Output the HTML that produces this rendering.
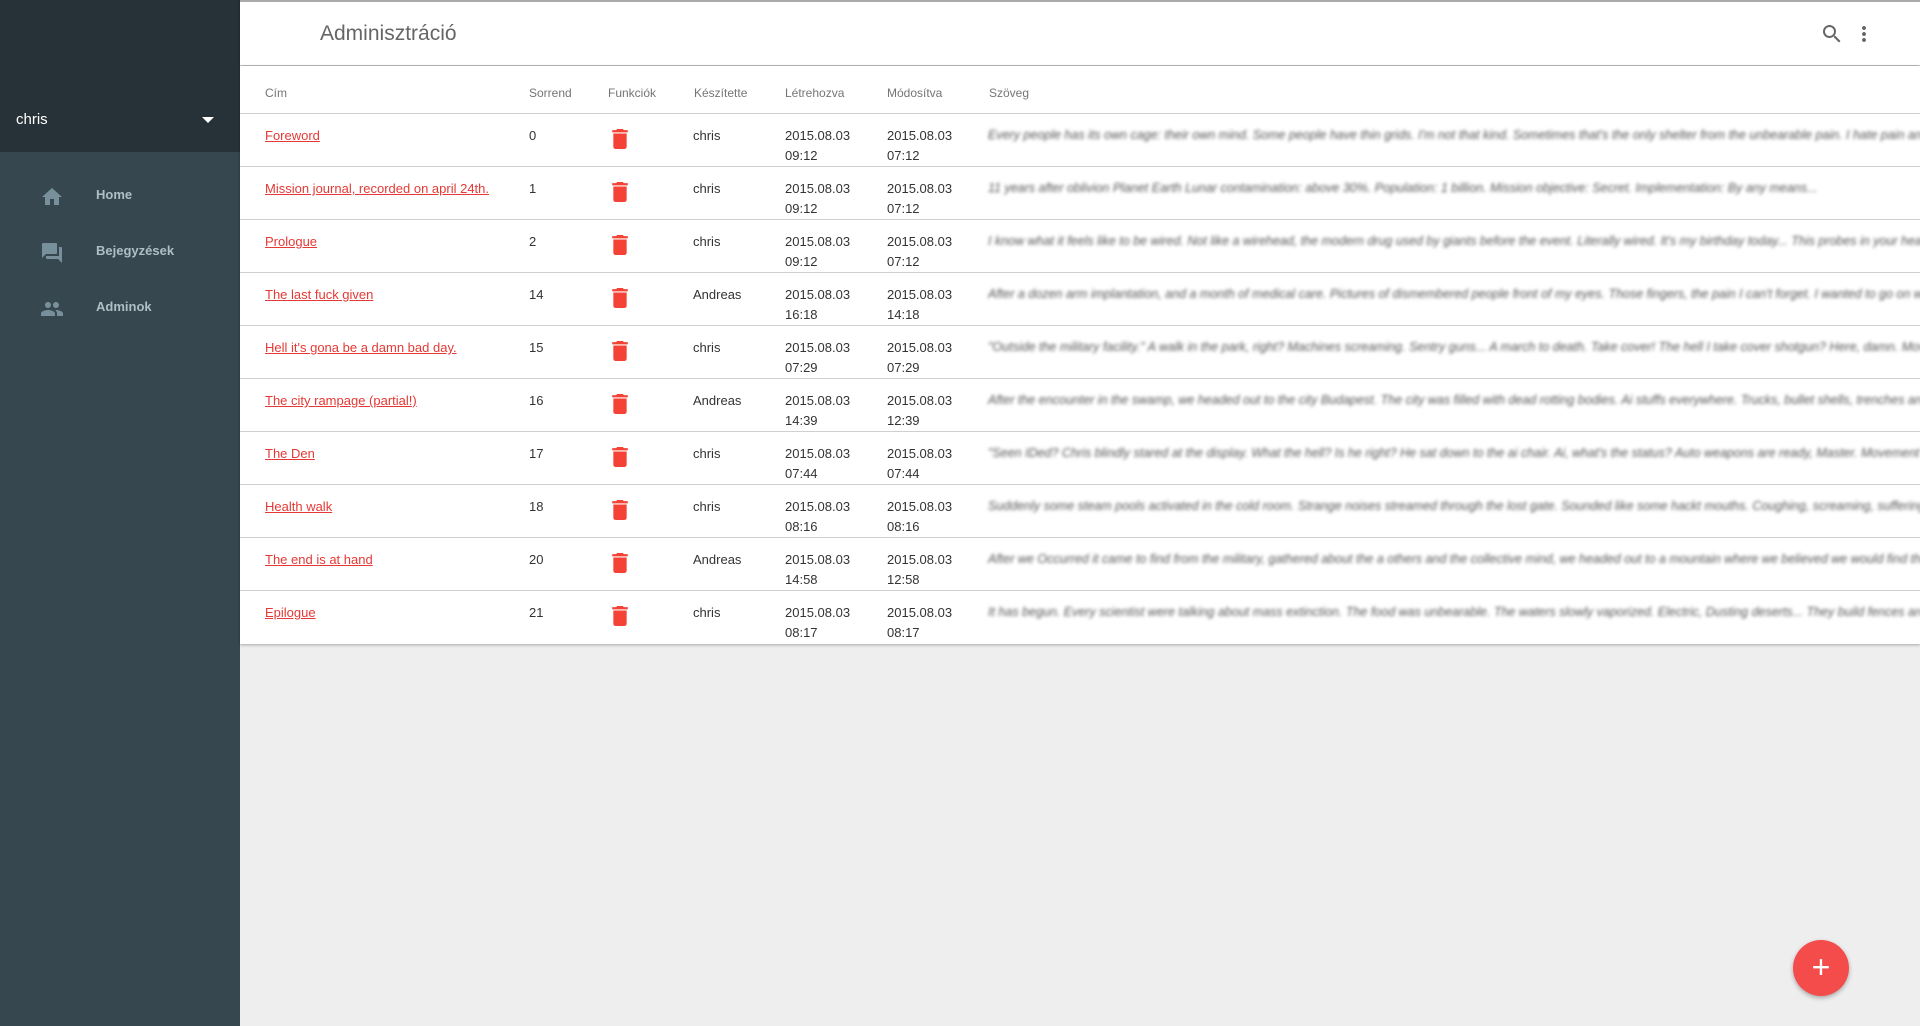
<!DOCTYPE html>
<html><head><meta charset="utf-8"><style>
*{margin:0;padding:0;box-sizing:border-box}
body{width:1920px;height:1026px;overflow:hidden;background:#eeeeee;font-family:"Liberation Sans",sans-serif;position:relative}
.side{position:absolute;left:0;top:0;width:240px;height:1026px;background:#37474f}
.sidetop{position:absolute;left:0;top:0;width:240px;height:152px;background:#263238}
.user{position:absolute;left:16px;top:111px;color:#fff;font-size:15px}
.caret{position:absolute;left:202px;top:117px;width:0;height:0;border-left:6px solid transparent;border-right:6px solid transparent;border-top:6px solid #fff}
.nav{position:absolute;left:0;width:240px;height:40px}
.nav span{position:absolute;left:96px;top:12px;color:#b0bec5;font-weight:bold;font-size:13px}
.nav svg{position:absolute;left:40px;top:10px}
.top{position:absolute;left:240px;top:0;width:1680px;height:65px;background:#fff;border-top:2px solid #aaa;box-shadow:0 1px 3px rgba(0,0,0,.35)}
.title{position:absolute;left:80px;top:20px;font-size:21px;color:#666}
.tbl{position:absolute;left:240px;top:66px;width:1680px;height:578px;background:#fff;box-shadow:0 1px 3px rgba(0,0,0,.3);overflow:hidden}
.th{position:absolute;top:20px;font-size:12px;color:#757575}
.row{position:absolute;left:0;width:1680px;height:53px;border-top:1px solid #d0d0d0}
.c{position:absolute;top:12px;font-size:13px;color:#333;line-height:20px}
a{color:#e53935;text-decoration:underline}
.blur{position:absolute;left:748px;top:14px;font-size:12.5px;color:#555;white-space:nowrap;filter:blur(1.5px);font-style:italic}
.trash{position:absolute;left:372px;top:15px}
.fab{position:absolute;left:1793px;top:940px;width:56px;height:56px;border-radius:50%;background:#f44b4b;box-shadow:0 2px 5px rgba(0,0,0,.3);color:#fff;font-size:32px;text-align:center;line-height:54px}
</style></head><body>
<div class="side">
<div class="sidetop"><div class="user">chris</div><div class="caret"></div></div>
<div class="nav" style="top:175px"><svg width="24" height="24" viewBox="0 0 24 24"><path fill="#78909c" d="M10 20v-6h4v6h5v-8h3L12 3 2 12h3v8z"/></svg><span>Home</span></div>
<div class="nav" style="top:231px"><svg width="24" height="24" viewBox="0 0 24 24"><path fill="#78909c" d="M21 6h-2v9H6v2c0 .55.45 1 1 1h11l4 4V7c0-.55-.45-1-1-1zm-4 6V3c0-.55-.45-1-1-1H3c-.55 0-1 .45-1 1v14l4-4h10c.55 0 1-.45 1-1z"/></svg><span>Bejegyzések</span></div>
<div class="nav" style="top:287px"><svg width="24" height="24" viewBox="0 0 24 24"><path fill="#78909c" d="M16 11c1.66 0 2.99-1.34 2.99-3S17.66 5 16 5c-1.66 0-3 1.34-3 3s1.34 3 3 3zm-8 0c1.66 0 2.99-1.340 2.99-3S9.66 5 8 5C6.34 5 5 6.34 5 8s1.34 3 3 3zm0 2c-2.33 0-7 1.17-7 3.5V19h14v-2.5c0-2.33-4.67-3.5-7-3.5zm8 0c-.29 0-.62.02-.97.05 1.16.84 1.970 1.97 1.97 3.45V19h6v-2.5c0-2.33-4.67-3.5-7-3.5z"/></svg><span>Adminok</span></div>
</div>
<div class="top"><div class="title">Adminisztráció</div>
<svg style="position:absolute;left:1580px;top:20px" width="24" height="24" viewBox="0 0 24 24"><path fill="#666" d="M15.5 14h-.79l-.28-.27A6.47 6.47 0 0 0 16 9.5 6.5 6.5 0 1 0 9.5 16c1.61 0 3.09-.59 4.23-1.57l.27.28v.79l5 4.99L20.49 19l-4.99-5zm-6 0C7.01 14 5 11.99 5 9.5S7.01 5 9.5 5 14 7.01 14 9.5 11.99 14 9.5 14z"/></svg>
<svg style="position:absolute;left:1612px;top:20px" width="24" height="24" viewBox="0 0 24 24"><path fill="#666" d="M12 8c1.1 0 2-.9 2-2s-.9-2-2-2-2 .9-2 2 .9 2 2 2zm0 2c-1.1 0-2 .9-2 2s.9 2 2 2 2-.9 2-2-.9-2-2-2zm0 6c-1.1 0-2 .9-2 2s.9 2 2 2 2-.9 2-2-.9-2-2-2z"/></svg>
</div>
<div class="tbl">
<div class="th" style="left:25px">Cím</div><div class="th" style="left:289px">Sorrend</div><div class="th" style="left:368px">Funkciók</div><div class="th" style="left:454px">Készítette</div><div class="th" style="left:545px">Létrehozva</div><div class="th" style="left:647px">Módosítva</div><div class="th" style="left:749px">Szöveg</div>
<div id="rows"></div>
</div>
<div class="fab">+</div>
<script>
var d=[["Foreword","0","chris","09:12","07:12","Every people has its own cage: their own mind. Some people have thin grids. I'm not that kind. Sometimes that's the only shelter from the unbearable pain. I hate pain and"],
["Mission journal, recorded on april 24th.","1","chris","09:12","07:12","11 years after oblivion Planet Earth Lunar contamination: above 30%. Population: 1 billion. Mission objective: Secret. Implementation: By any means..."],
["Prologue","2","chris","09:12","07:12","I know what it feels like to be wired. Not like a wirehead, the modern drug used by giants before the event. Literally wired. It's my birthday today... This probes in your head are"],
["The last fuck given","14","Andreas","16:18","14:18","After a dozen arm implantation, and a month of medical care. Pictures of dismembered people front of my eyes. Those fingers, the pain I can't forget. I wanted to go on with it"],
["Hell it's gona be a damn bad day.","15","chris","07:29","07:29","\"Outside the military facility.\" A walk in the park, right? Machines screaming. Sentry guns... A march to death. Take cover! The hell I take cover shotgun? Here, damn. Move on"],
["The city rampage (partial!)","16","Andreas","14:39","12:39","After the encounter in the swamp, we headed out to the city Budapest. The city was filled with dead rotting bodies. Ai stuffs everywhere. Trucks, bullet shells, trenches and"],
["The Den","17","chris","07:44","07:44","\"Seen IDed? Chris blindly stared at the display. What the hell? Is he right? He sat down to the ai chair. Ai, what's the status? Auto weapons are ready, Master. Movement in"],
["Health walk","18","chris","08:16","08:16","Suddenly some steam pools activated in the cold room. Strange noises streamed through the lost gate. Sounded like some hackt mouths. Coughing, screaming, suffering there"],
["The end is at hand","20","Andreas","14:58","12:58","After we Occurred it came to find from the military, gathered about the a others and the collective mind, we headed out to a mountain where we believed we would find them all"],
["Epilogue","21","chris","08:17","08:17","It has begun. Every scientist were talking about mass extinction. The food was unbearable. The waters slowly vaporized. Electric, Dusting deserts... They build fences around"]];
var h="";d.forEach(function(r,i){h+='<div class="row" style="top:'+(47+i*53)+'px"><div class="c" style="left:25px"><a>'+r[0]+'</a></div><div class="c" style="left:289px">'+r[1]+'</div><svg class="trash" width="16" height="20" viewBox="5 3 14 18"><path fill="#f44336" d="M6 19c0 1.1.9 2 2 2h8c1.1 0 2-.9 2-2V7H6v12zM19 4h-3.5l-1-1h-5l-1 1H5v2h14V4z"/></svg><div class="c" style="left:453px">'+r[2]+'</div><div class="c" style="left:545px">2015.08.03<br>'+r[3]+'</div><div class="c" style="left:647px">2015.08.03<br>'+r[4]+'</div><div class="blur">'+r[5]+'</div></div>'});
document.getElementById("rows").innerHTML=h;
</script>
</body></html>
